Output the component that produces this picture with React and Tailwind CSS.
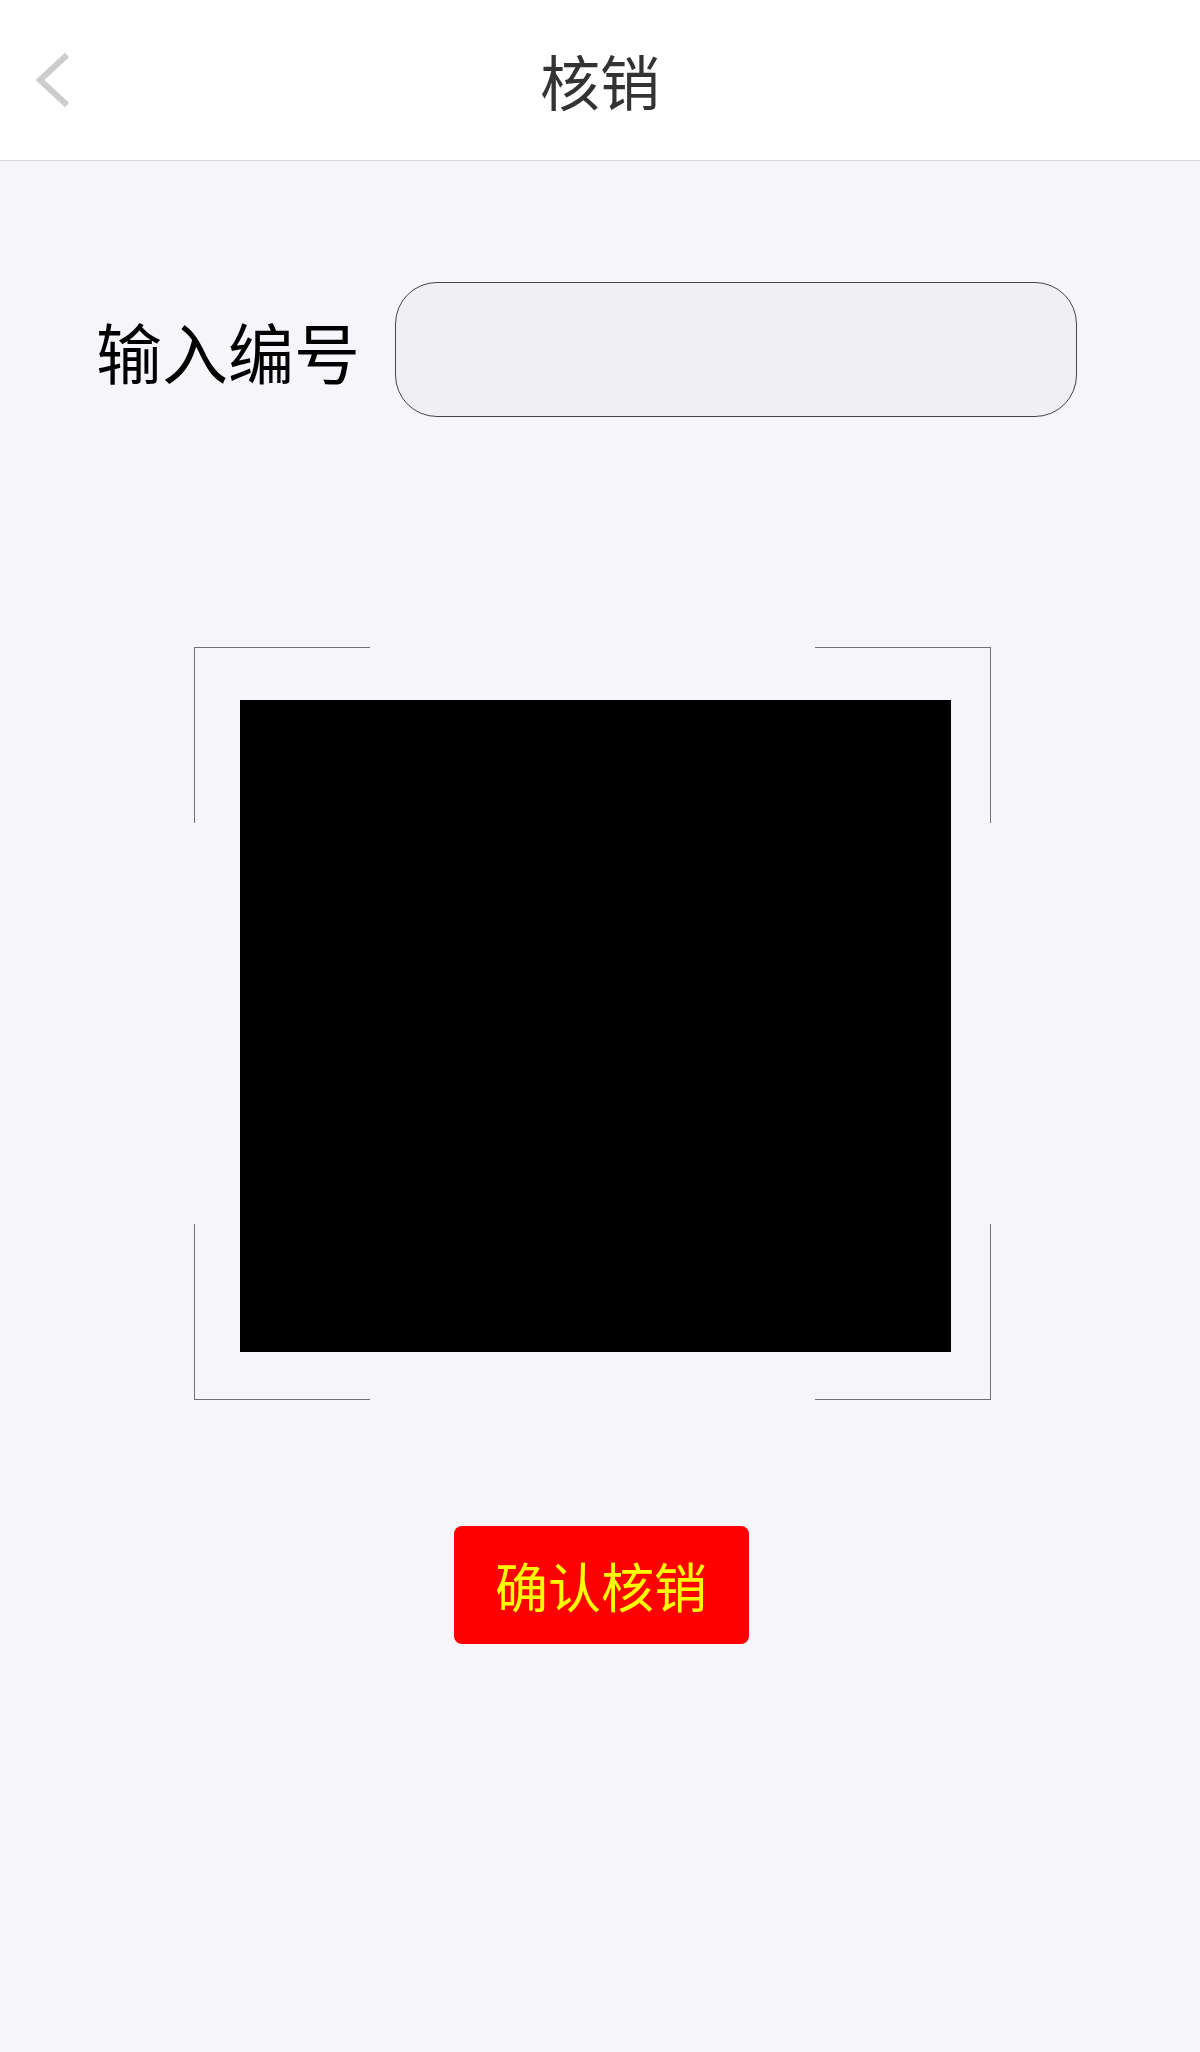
import React from "react";

const font = { fontFamily: '"Noto Sans CJK SC", "Noto Sans", sans-serif' };

export default function App() {
  return (
    <div className="min-h-[2052px] w-full bg-[#f5f5fa]" style={font}>
      <header className="relative flex h-[161px] items-center justify-center border-b border-[#d6d6dc] bg-white">
        <svg className="absolute left-[32px] top-[50px]" width="46" height="62" viewBox="0 0 46 62">
          <polyline points="35,5 8,30 35,55" fill="none" stroke="#cccccc" strokeWidth="6" strokeLinecap="butt" strokeLinejoin="miter" />
        </svg>
        <h1 className="text-[60px] leading-none text-[#333333] font-normal">核销</h1>
      </header>

      <div className="mt-[121px] flex items-center pl-[96px]">
        <span className="text-[66px] leading-none text-black">输入编号</span>
        <div className="ml-[35px] h-[135px] w-[682px] rounded-[42px] border border-[#444444] bg-[#efeff4]" />
      </div>

      <div className="relative ml-[194px] mt-[230px] h-[753px] w-[797px]">
        <div className="absolute left-0 top-0 h-[176px] w-[176px] border-l border-t border-[#707075]" />
        <div className="absolute right-0 top-0 h-[176px] w-[176px] border-r border-t border-[#707075]" />
        <div className="absolute bottom-0 left-0 h-[176px] w-[176px] border-b border-l border-[#707075]" />
        <div className="absolute bottom-0 right-0 h-[176px] w-[176px] border-b border-r border-[#707075]" />
        <div className="pl-[46px] pt-[53px]">
          <div className="h-[652px] w-[711px] bg-black" />
        </div>
      </div>

      <div className="mt-[126px] flex justify-center">
        <button className="ml-[2px] flex h-[118px] w-[295px] items-center justify-center rounded-[8px] bg-[#ff0000] text-[53px] leading-none text-[#ffff00]">
          确认核销
        </button>
      </div>
    </div>
  );
}
